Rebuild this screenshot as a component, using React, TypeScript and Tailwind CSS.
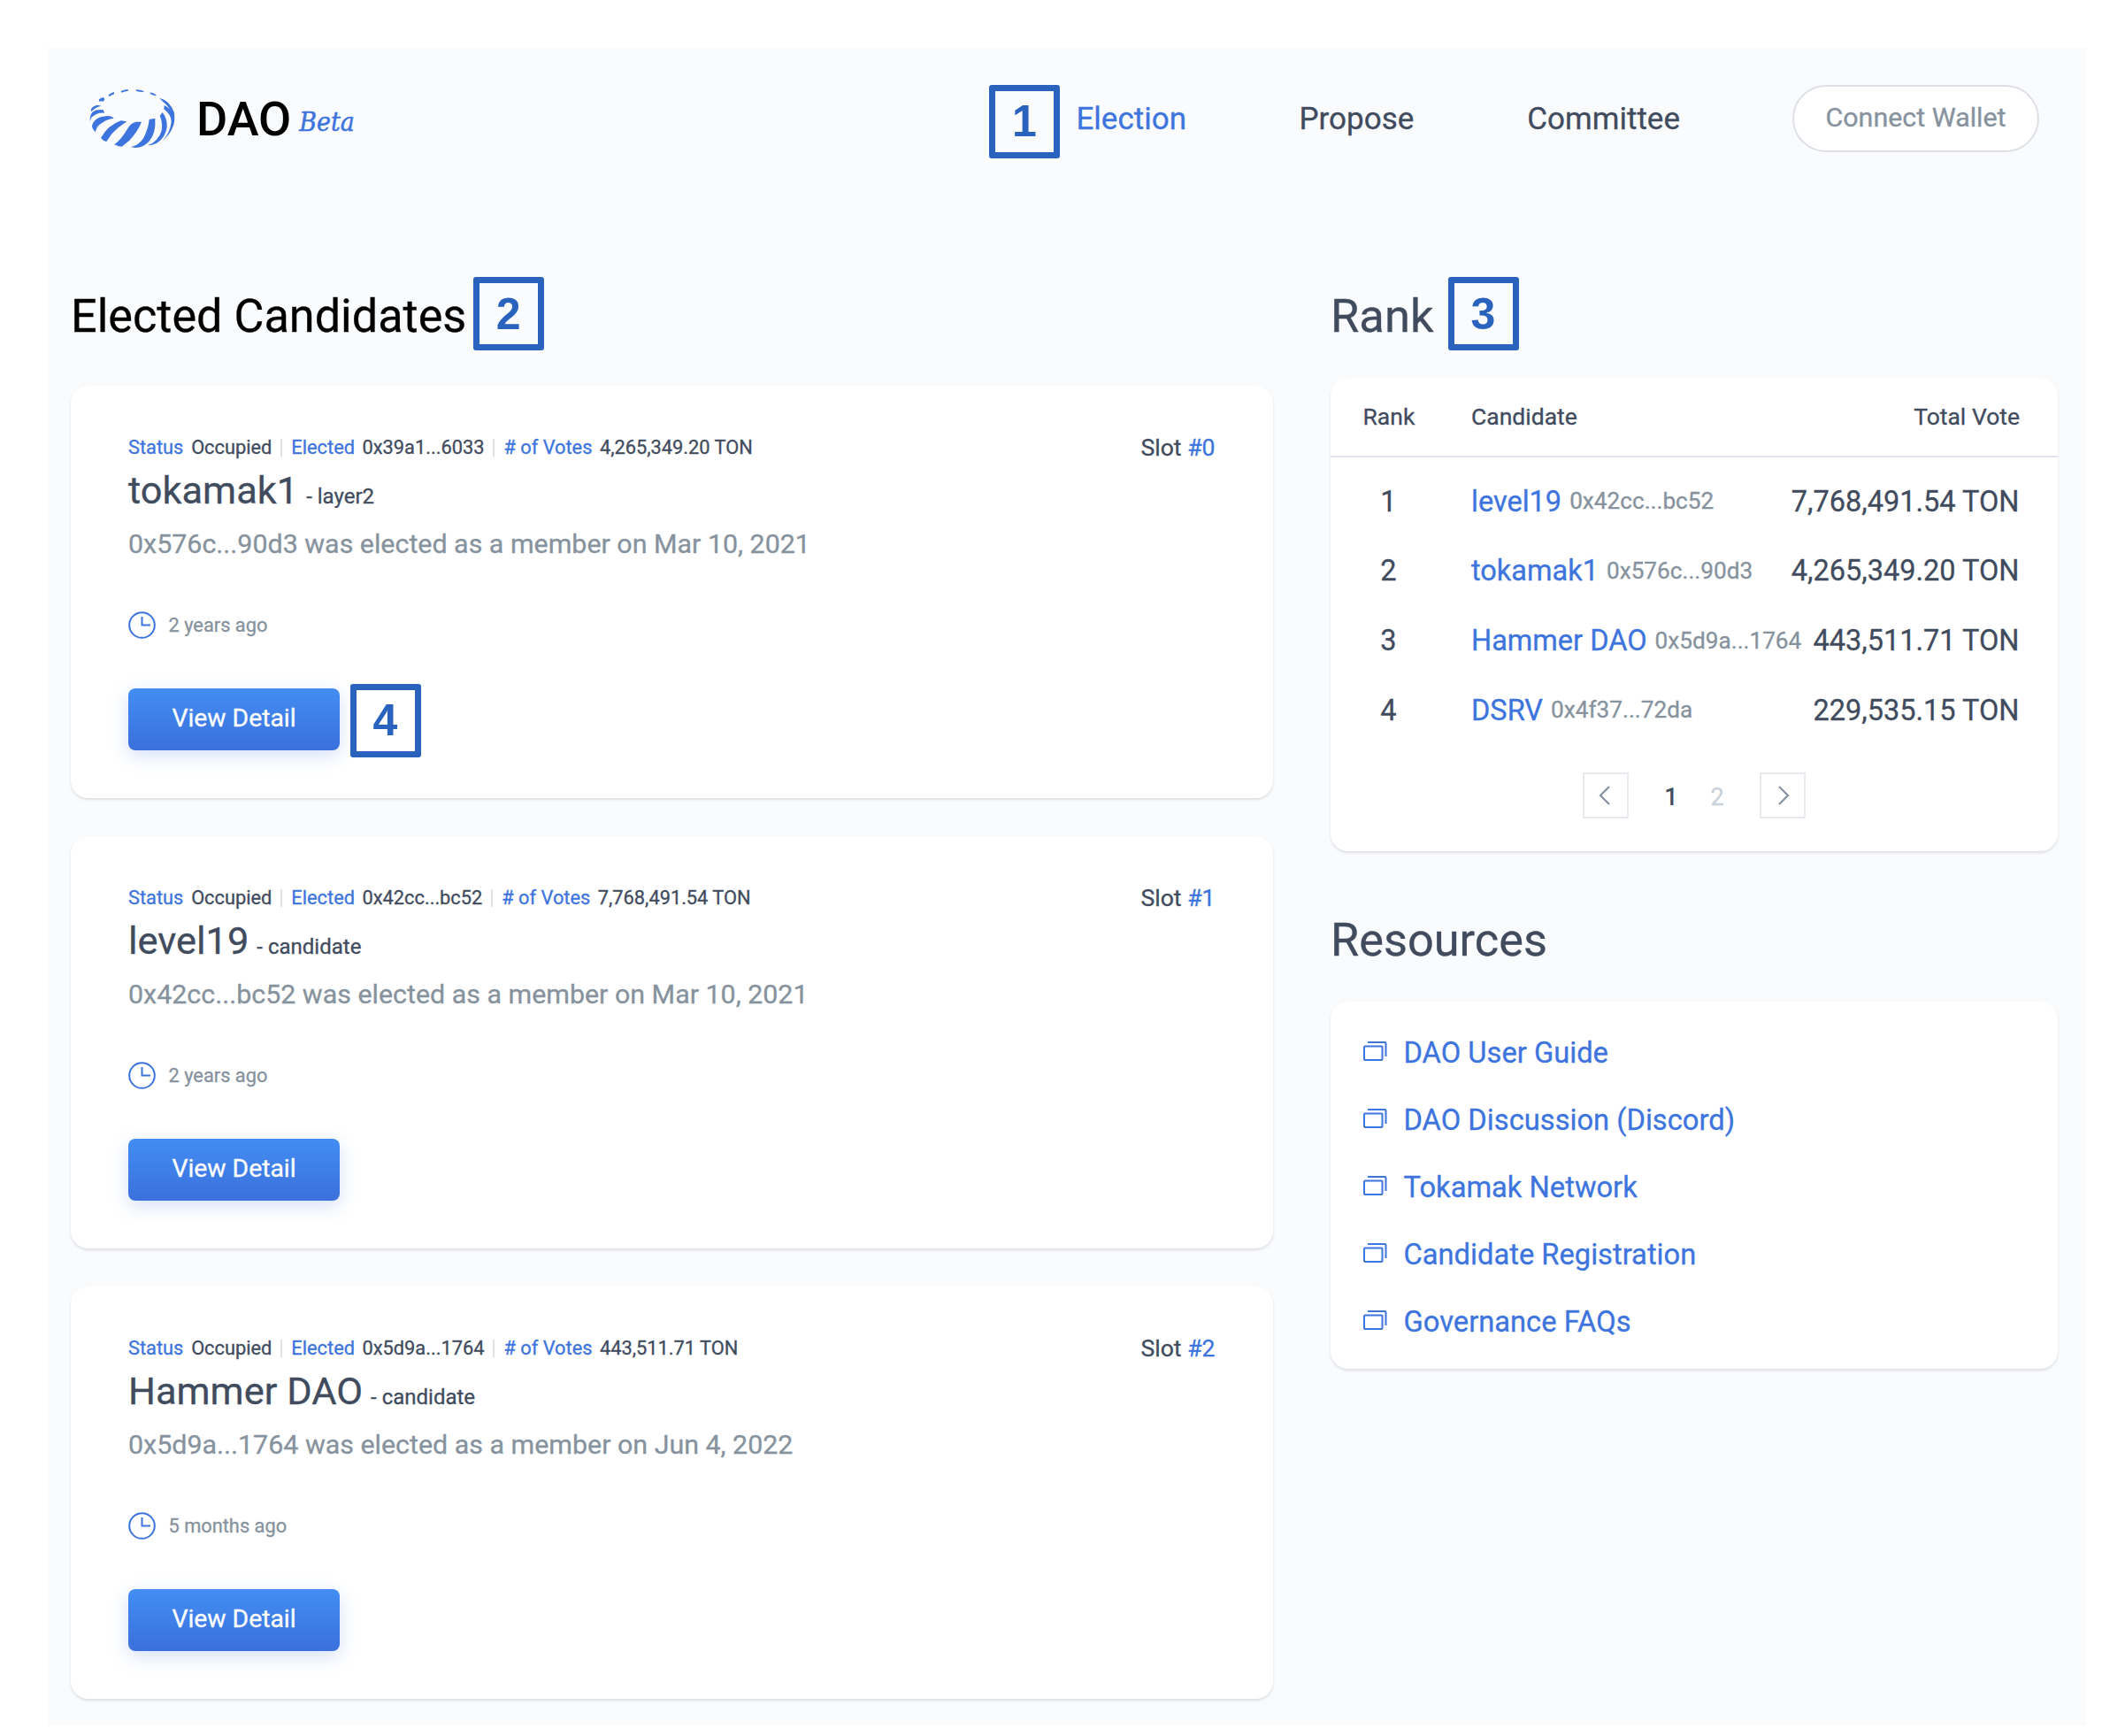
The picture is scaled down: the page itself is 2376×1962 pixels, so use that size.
import React from 'react';

const candidates = [
  { slot: '#0', elected: '0x39a1...6033', votes: '4,265,349.20 TON', name: 'tokamak1', kind: 'layer2', text: '0x576c...90d3 was elected as a member on Mar 10, 2021', ago: '2 years ago' },
  { slot: '#1', elected: '0x42cc...bc52', votes: '7,768,491.54 TON', name: 'level19', kind: 'candidate', text: '0x42cc...bc52 was elected as a member on Mar 10, 2021', ago: '2 years ago' },
  { slot: '#2', elected: '0x5d9a...1764', votes: '443,511.71 TON', name: 'Hammer DAO', kind: 'candidate', text: '0x5d9a...1764 was elected as a member on Jun 4, 2022', ago: '5 months ago' },
];

const ranks = [
  { rank: 1, name: 'level19', address: '0x42cc...bc52', vote: '7,768,491.54 TON' },
  { rank: 2, name: 'tokamak1', address: '0x576c...90d3', vote: '4,265,349.20 TON' },
  { rank: 3, name: 'Hammer DAO', address: '0x5d9a...1764', vote: '443,511.71 TON' },
  { rank: 4, name: 'DSRV', address: '0x4f37...72da', vote: '229,535.15 TON' },
];

const resources = ['DAO User Guide', 'DAO Discussion (Discord)', 'Tokamak Network', 'Candidate Registration', 'Governance FAQs'];

function Marker({ n }: { n: number }) {
  return (
    <span className="flex h-[83px] w-[80px] shrink-0 items-center justify-center rounded-[3px] border-[7.5px] border-[#2a63be] font-['Liberation_Sans',sans-serif] text-[50px] leading-none font-bold text-[#2a63be] [-webkit-text-stroke:0px]">
      {n}
    </span>
  );
}

function Logo() {
  return (
    <svg className="h-[76px] w-[108px]" viewBox="0 0 324 228" fill="#3d74dd">
      <path d="M122 21Q134 15 147 15L146 20Q134 21 124 26Z" />
      <path d="M173 16Q188 16 200 21L198 24Q185 24 174 21Z" />
      <path d="M221 25Q234 28 243 35L240 37Q230 35 222 30Z" />
      <path d="M80 34Q88 26 99 24V31Q90 34 82 40Z" />
      <path d="M48 49Q55 43 63 42L67 49L62 56Q53 54 48 56Z" />
      <path d="M20 86Q22 72 42 68L55 71Q34 76 22 90Z" />
      <path d="M17 113Q19 84 50 84L62 85L67 95Q38 93 21 112L17 124Z" />
      <path d="M24 139Q31 108 76 105Q91 105 98 113Q66 117 42 142L35 160Q24 148 24 139Z" />
      <path d="M54 180Q77 137 122 121L142 124Q112 143 91 166L73 192Q61 189 54 180Z" />
      <path d="M100 202Q126 181 144 149Q156 128 173 125H192Q181 155 151 188L125 209Q111 209 100 202Z" />
      <path d="M155 210Q184 206 200 178Q216 143 218 117L238 113Q242 165 216 193Q198 213 172 213Z" />
      <path d="M214 205Q249 190 260 155Q265 129 254 104L263 93Q280 115 278 143Q273 179 244 197Q228 205 214 205Z" />
      <path d="M264 188Q289 162 293 126Q293 100 268 82L269 69Q292 80 301 103Q308 153 264 188Z" />
      <path d="M252 44Q287 51 303 94Q306 130 297 144Q306 87 264 56Z" />
    </svg>
  );
}

function Chevron({ left }: { left?: boolean }) {
  return (
    <span className="flex size-[52px] items-center justify-center border-2 border-[#e7ebf0] bg-white">
      <svg className="h-6 w-4" viewBox="0 0 16 24" fill="none" stroke="#86929d" strokeWidth="2.2">
        <path d={left ? 'M12 2L2 12L12 22' : 'M4 2L14 12L4 22'} />
      </svg>
    </span>
  );
}

const cardClass = 'rounded-[20px] bg-white shadow-[0_2px_3px_rgba(60,65,75,0.15)]';

export default function App() {
  return (
    <div className="h-[1962px] w-[2376px] overflow-hidden bg-white pt-[54px] pl-[54px] font-[Roboto,sans-serif] text-[#414b5e] [-webkit-text-stroke:0.3px]">
      <div className="h-[1896px] w-[2304px] bg-[#fafbfd]">
        <header className="flex h-[160px] items-center pr-[53px] pl-[42px]">
          <Logo />
          <span className="ml-[18px] pt-[2px] text-[54px] leading-[64px] font-medium text-black [-webkit-text-stroke:0px]">DAO</span>
          <span className="ml-[9px] pt-[7px] font-['DejaVu_Serif_Condensed','DejaVu_Serif',serif] text-[29.8px] leading-[40px] [font-stretch:condensed] text-[#3d74dd] italic [-webkit-text-stroke:0.5px]">Beta</span>
          <nav className="ml-auto flex items-center text-[35px] leading-[42px]">
            <div className="mt-[6px]"><Marker n={1} /></div>
            <a className="ml-[18.5px] pt-[2px] text-[#3d74dd]">Election</a>
            <a className="ml-[127.5px] pt-[2px]">Propose</a>
            <a className="ml-[128px] pt-[2px]">Committee</a>
            <button className="ml-[127px] flex h-[76px] w-[279px] items-center justify-center rounded-full border-2 border-[#dfe0e5] bg-white pb-[3px] text-[30.4px] text-[#86929d]">Connect Wallet</button>
          </nav>
        </header>

        <main className="flex gap-[65px] pt-[99px] pl-[26px]">
          <section className="w-[1359px]">
            <div className="flex h-[83px] items-center">
              <h1 className="pt-[6px] text-[52.2px] leading-[64px] text-black">Elected Candidates</h1>
              <div className="ml-[7.5px]"><Marker n={2} /></div>
            </div>
            <div className="mt-[40px] flex flex-col gap-[43.5px]">
              {candidates.map((c) => (
                <article key={c.slot} className={`h-[465.5px] px-[65px] pt-[55px] ${cardClass}`}>
                  <div className="flex h-[30px] items-center text-[21.8px]">
                    <span className="text-[#3d74dd]">Status</span>
                    <span className="ml-[8.8px]">Occupied</span>
                    <i className="mx-[10px] h-5 w-[2px] bg-[#dde1e6]" />
                    <span className="text-[#3d74dd]">Elected</span>
                    <span className="ml-[8.5px]">{c.elected}</span>
                    <i className="mx-[10px] h-5 w-[2px] bg-[#dde1e6]" />
                    <span className="text-[#3d74dd]"># of Votes</span>
                    <span className="ml-[8.5px]">{c.votes}</span>
                    <span className="mr-[0.5px] ml-auto text-[26.6px]">Slot <span className="text-[#3d74dd]">{c.slot}</span></span>
                  </div>
                  <div className="mt-[7px] flex h-[54px] items-baseline">
                    <h2 className="text-[43.4px] leading-[54px]">{c.name}</h2>
                    <span className="ml-[9px] text-[24px] leading-[30px]">- {c.kind}</span>
                  </div>
                  <p className="mt-[13px] text-[30.4px] leading-[40px] text-[#86929d]">{c.text}</p>
                  <div className="mt-[55.5px] flex h-[32px] items-center text-[21.8px] text-[#86929d]">
                    <svg className="size-[31px]" viewBox="0 0 31 31" fill="none" stroke="#3d74dd" strokeWidth="2">
                      <circle cx="15.5" cy="15.5" r="14.3" />
                      <path d="M15.5 6V15.5H25" />
                    </svg>
                    <span className="ml-[14.5px] pt-[1px]">{c.ago}</span>
                  </div>
                  <button className="mt-[55px] flex h-[70px] w-[239px] items-center justify-center rounded-[8px] bg-linear-to-b from-[#428df3] to-[#3b70dc] text-[28.3px] text-white shadow-[0_6px_20px_rgba(61,116,221,0.22)]">
                    View Detail
                  </button>
                  {c.slot === '#0' && (
                    <div className="relative">
                      <div className="absolute bottom-[-8px] left-[250.5px]"><Marker n={4} /></div>
                    </div>
                  )}
                </article>
              ))}
            </div>
          </section>

          <aside className="w-[822px]">
            <div className="flex h-[83px] items-center">
              <h1 className="pt-[5px] text-[52.5px] leading-[64px]">Rank</h1>
              <div className="ml-[16px]"><Marker n={3} /></div>
            </div>
            <div className={`mt-[31px] h-[535px] ${cardClass}`}>
              <div className="flex h-[90px] items-center border-b-2 border-[#e2e5f0] pr-[43px] pl-[36.5px] text-[26.5px]">
                <span className="w-[122.5px]">Rank</span>
                <span>Candidate</span>
                <span className="ml-auto">Total Vote</span>
              </div>
              <div className="pt-[10.8px]">
                {ranks.map((r) => (
                  <div key={r.rank} className="flex h-[78.6px] items-center pr-[43.5px] pl-[35.5px] text-[32.5px]">
                    <span className="mr-[63.5px] w-[60px] text-center">{r.rank}</span>
                    <span className="text-[#3d74dd]">{r.name}</span>
                    <span className="ml-[9px] text-[26.2px] text-[#86929d]">{r.address}</span>
                    <span className="ml-auto">{r.vote}</span>
                  </div>
                ))}
              </div>
              <div className="mt-[30.8px] flex items-center justify-center text-[27px]">
                <Chevron left />
                <span className="ml-[40px] pt-[4px] font-medium [-webkit-text-stroke:0px]">1</span>
                <span className="ml-[37px] pt-[4px] text-[#c9d1d8]">2</span>
                <span className="ml-[40px]"><Chevron /></span>
              </div>
            </div>
            <h1 className="mt-[67.5px] text-[52.3px] leading-[64px]">Resources</h1>
            <ul className={`mt-[38px] pt-[20.5px] pb-[15px] ${cardClass}`}>
              {resources.map((label) => (
                <li key={label} className="flex h-[76.1px] items-center pl-[36px] text-[32.7px] text-[#3d74dd]">
                  <svg className="mb-[4px] h-[26px] w-[28px]" viewBox="0 0 28 26" fill="none" stroke="#3d74dd" strokeWidth="2">
                    <rect x="2" y="7.5" width="20.5" height="15.5" rx="1" />
                    <path d="M6 3H25.5Q26.5 3 26.5 4V19" />
                  </svg>
                  <span className="ml-[18.5px]">{label}</span>
                </li>
              ))}
            </ul>
          </aside>
        </main>
      </div>
    </div>
  );
}
